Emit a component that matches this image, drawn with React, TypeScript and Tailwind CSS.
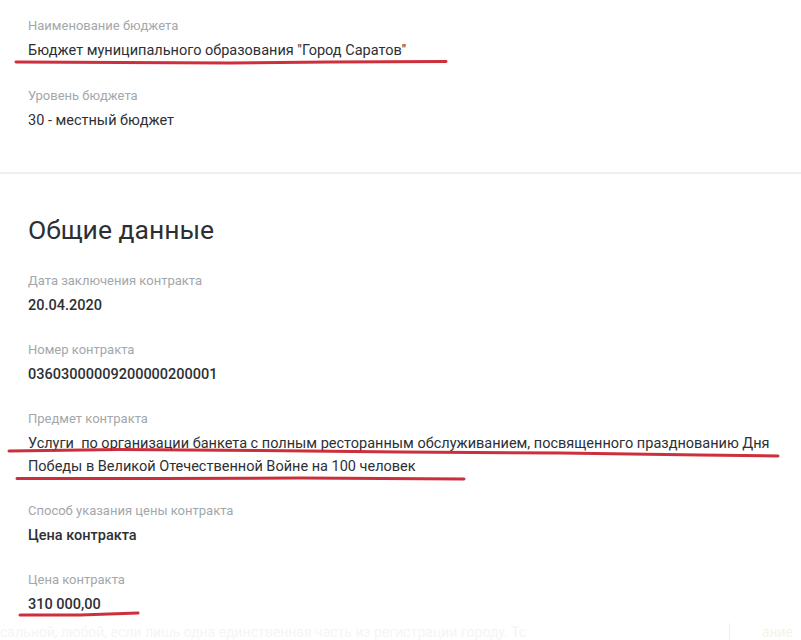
import React from "react";

type FieldProps = {
  label: string;
  children: React.ReactNode;
  strong?: boolean;
};

function Field({ label, children, strong }: FieldProps) {
  return (
    <div className="flex flex-col">
      <span className="text-[13px] leading-5 text-[#a3a7ab]">{label}</span>
      <span
        className={
          "mt-[3px] text-[14.5px] leading-[23px] text-[#2c3035] " +
          (strong ? "font-medium" : "font-normal")
        }
      >
        {children}
      </span>
    </div>
  );
}

// red marker strokes drawn on top of the page
function Marks() {
  return (
    <svg
      className="pointer-events-none absolute left-0 top-0"
      width="801"
      height="640"
      viewBox="0 0 801 640"
      fill="none"
    >
      <g stroke="#c81e2c" strokeWidth="3" strokeLinecap="round" strokeLinejoin="round" opacity="0.92">
        <path d="M16 62 L120 62.5 L230 63 L330 62 L446 61.5" />
        <path d="M9 451 L120 449.5 L260 450.5 L400 452 L560 453 L700 455 L778 456" />
        <path d="M17 478.5 L160 478.5 L300 478 L464 479" />
        <path d="M20 615 L80 615 L138 613" />
      </g>
    </svg>
  );
}

export default function App() {
  return (
    <div
      className="relative h-[640px] w-[801px] overflow-hidden bg-white"
      style={{ fontFamily: "Roboto, 'Noto Sans', sans-serif" }}
    >
      <section className="flex flex-col gap-[24px] px-7 pb-[40px] pt-4">
        <Field label="Наименование бюджета">
          Бюджет муниципального образования "Город Саратов"
        </Field>
        <Field label="Уровень бюджета">30 - местный бюджет</Field>
      </section>

      <section className="border-t-2 border-[#eef0f2] px-7 pt-[40px]">
        <h2 className="text-[26.5px] leading-8 font-normal text-[#2c3035]">Общие данные</h2>
        <div className="mt-[25px] flex flex-col gap-[23px]">
          <Field label="Дата заключения контракта" strong>
            20.04.2020
          </Field>
          <Field label="Номер контракта" strong>
            03603000009200000200001
          </Field>
          <Field label="Предмет контракта">
            <span className="whitespace-nowrap">
              Услуги&nbsp; по организации банкета с полным ресторанным обслуживанием, посвященного празднованию Дня
            </span>
            <br />
            Победы в Великой Отечественной Войне на 100 человек
          </Field>
          <Field label="Способ указания цены контракта" strong>
            Цена контракта
          </Field>
          <Field label="Цена контракта" strong>
            310 000,00
          </Field>
        </div>
      </section>

      <div className="mt-[7px] flex h-[18px] items-center text-[14px] leading-[18px] text-[#f5f5f5]">
        <span className="whitespace-nowrap">
          сальной, любой, если лишь одна единственная часть из регистрации городу. Тс
        </span>
        <span className="ml-auto mr-2 h-[18px] border-l border-[#f0f0f0] pl-8 text-[#f6f3e8]">ание</span>
      </div>

      <Marks />
    </div>
  );
}
